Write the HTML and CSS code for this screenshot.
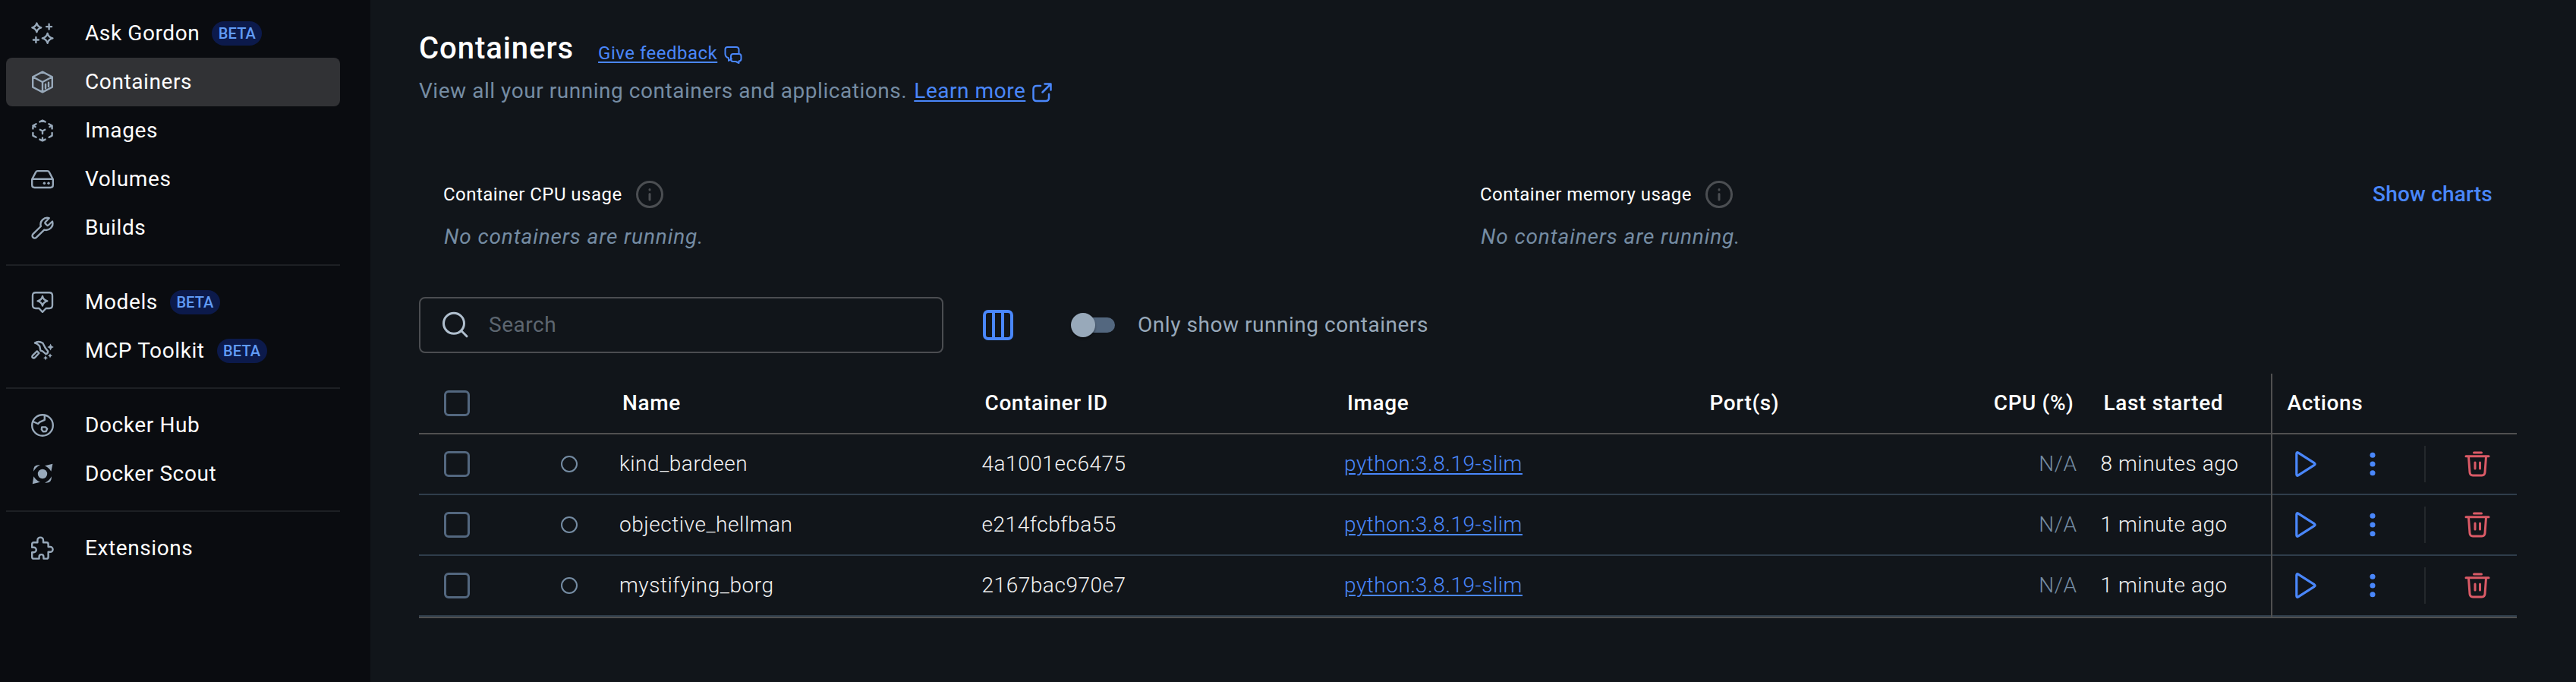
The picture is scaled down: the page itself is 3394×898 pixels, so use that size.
FILE: index.html
```html
<!DOCTYPE html>
<html lang="en">
<head>
<meta charset="utf-8">
<title>Containers</title>
<link rel="stylesheet" href="styles.css">
</head>
<body>
<div class="app">
  <nav class="sidebar">
    <a class="item">
      <svg class="icon" viewBox="0 0 32 32"><path d="M8.4 2.6Q9.4 7 14.2 8.4Q9.4 9.8 8.4 14.2Q7.2 9.8 2.4 8.4Q7.2 7 8.4 2.6ZM22.6 16Q23.8 21 29.4 22.4Q23.8 23.8 22.6 28.8Q21.3 23.8 15.8 22.4Q21.3 21 22.6 16ZM24.6 3.6v7M21.1 7.1h7M7.4 21v7M3.9 24.5h7"/></svg>
      <span>Ask Gordon</span><b class="badge">BETA</b>
    </a>
    <a class="item active">
      <svg class="icon" viewBox="0 0 32 32"><path d="M16 2.6 28.8 9.3V22.7L16 29.4 3.2 22.7V9.3ZM3.2 9.3 16 16 28.8 9.3M16 16V29M20 19v5.2M24 16.8v5.2"/></svg>
      <span>Containers</span>
    </a>
    <a class="item">
      <svg class="icon" viewBox="0 0 32 32"><path d="M12.4 4.4 16 2.6 19.6 4.4M24.4 7.2 28.6 9.5V13.4M28.6 9.5 25.4 11M28.6 19V22.6L24.6 24.7M19.6 27.6 16 29.4 12.4 27.6M16 29V25.4M7.6 24.7 3.4 22.6V19M3.4 13.4V9.5L7.6 7.2M3.4 9.5 6.6 11M12.8 14.8 16 16.5 19.2 14.8M16 16.5V20"/></svg>
      <span>Images</span>
    </a>
    <a class="item">
      <svg class="icon" viewBox="0 0 32 32"><path d="M2.2 16 7.2 6.6Q7.9 5.1 9.6 5.1H22.4Q24.1 5.1 24.8 6.6L29.8 16V23.6Q29.8 27 26.4 27H5.6Q2.2 27 2.2 23.6ZM2.6 15.8H29.4"/><g class="solid"><circle cx="18.4" cy="21.2" r="1.7"/><circle cx="24" cy="21.2" r="1.7"/></g></svg>
      <span>Volumes</span>
    </a>
    <a class="item">
      <svg class="icon" viewBox="0 0 32 32"><path d="M19.7 8.5a1.3 1.3 0 0 0 0 1.8l2.2 2.2a1.3 1.3 0 0 0 1.8 0L29 7.5A8.8 8.8 0 0 1 18.3 18.6L7.9 28.6a2.9 2.9 0 0 1-4.4-4.4L13.8 14A8.8 8.8 0 0 1 24.7 3.2Z"/></svg>
      <span>Builds</span>
    </a>
    <hr class="rule">
    <a class="item">
      <svg class="icon" viewBox="0 0 32 32"><path d="M7 3.2H25Q29 3.2 29 7.2V20Q29 24 25 24H20.6L16 28.8 11.4 24H7Q3 24 3 20V7.2Q3 3.2 7 3.2ZM16 8Q17 13 22.4 14.3Q17 15.6 16 20.6Q15 15.6 9.6 14.3Q15 13 16 8Z"/></svg>
      <span>Models</span><b class="badge">BETA</b>
    </a>
    <a class="item">
      <svg class="icon" viewBox="0 0 32 32"><path d="M6 5.600Q10.600 2.400 16.400 5.800L18.600 10 20 12.600 23.200 16.400Q23.400 19.400 20.400 20.200L16 16.400 13.400 15.600 12.200 9.800Q9.600 6.200 6 5.600ZM8.800 16.400 11.400 19 6.400 24.400Q4.400 26.400 3 25T3.400 21.600Z"/><g class="solid"><path d="M26.600 6.600 28 9.600 30.800 11 28 12.400 26.600 15.400 25.200 12.400 22.400 11 25.200 9.600ZM26 19.200 27 21.300 29 22.300 27 23.300 26 25.400 25 23.300 23 22.300 25 21.300ZM20 22 21 24.200 23 25.200 21 26.200 20 28.400 19 26.200 17 25.200 19 24.200Z"/></g></svg>
      <span>MCP Toolkit</span><b class="badge">BETA</b>
    </a>
    <hr class="rule">
    <a class="item">
      <svg class="icon" viewBox="0 0 32 32"><circle cx="16" cy="16" r="13.8"/><path d="M3.4 11 10 14 12.6 11.6 18.8 8.8V3M15.2 18.4 20 18.4 22.2 20.6 20.6 24 16.8 24.2 14.8 21.6Z"/></svg>
      <span>Docker Hub</span>
    </a>
    <a class="item">
      <svg class="icon" viewBox="0 0 32 32"><g class="solid"><circle cx="16" cy="16" r="6.2"/><path d="M29.400 2.800 27.400 12.800Q24.800 7.800 19 5.200ZM2.800 29.200 4.400 19.200Q7.200 24.200 13 26.800ZM4.200 12.800Q3.200 3.600 12.800 4.400Q6.800 7.200 4.200 12.800ZM27.800 19.200Q28.600 28.400 19.200 27.600Q25.200 24.800 27.800 19.200Z"/></g></svg>
      <span>Docker Scout</span>
    </a>
    <hr class="rule">
    <a class="item">
      <svg class="icon" viewBox="0 0 32 32"><path d="M9.4 8.2V5.4a3.7 3.7 0 0 1 7.6 0V8.2H21.4Q23.6 8.2 23.6 10.4V14H26.2a3.4 3.4 0 0 1 0 6.8H23.6V27.4Q23.6 29.6 21.4 29.6H17.4V27a2.9 2.9 0 0 0-5.8 0V29.6H4.4Q2.2 29.6 2.2 27.4V21.2H4.6a3.2 3.2 0 0 0 0-6.4H2.2V10.4Q2.2 8.2 4.4 8.2Z"/></svg>
      <span>Extensions</span>
    </a>
  </nav>

  <main class="main">
    <header class="heading">
      <h1>Containers</h1>
      <a class="feedback"><u>Give feedback</u><svg viewBox="0 0 24 24"><path d="M4.5 2H16Q19.5 2 19.5 5.500V11M10 17.500 6 20V16.500Q1.500 15 1.500 11V5Q1.500 2 4.500 2M12 11H19.500Q22.500 11 22.500 14V17.500Q22.500 20.500 19.500 20.500V23L15.500 21H12Q9 21 9 18V14Q9 11 12 11Z"/></svg></a>
    </header>
    <p class="intro"><span>View all your running containers and applications.</span> <a class="learn"><u>Learn more</u><svg viewBox="0 0 26 26"><path d="M11 4H6Q1.500 4 1.500 8.500V20Q1.500 24 6 24H17.500Q22 24 22 20V15M16.500 1.500H24.500V9.500M24 2 13.500 12.500"/></svg></a></p>

    <section class="usage">
      <div class="metric">
        <div class="metric-title"><span>Container CPU usage</span><svg class="info" viewBox="0 0 36 36"><circle cx="18" cy="18" r="16.500"/><path d="M18 17.500v7.500M18 11.500v.5"/></svg></div>
        <em>No containers are running.</em>
      </div>
      <div class="metric">
        <div class="metric-title"><span>Container memory usage</span><svg class="info" viewBox="0 0 36 36"><circle cx="18" cy="18" r="16.500"/><path d="M18 17.500v7.500M18 11.500v.5"/></svg></div>
        <em>No containers are running.</em>
      </div>
      <a class="show">Show charts</a>
    </section>

    <section class="toolbar">
      <div class="search"><svg viewBox="0 0 36 36"><circle cx="16" cy="15.800" r="13.500"/><path d="M25.500 25.300 33 32.800"/></svg><span>Search</span></div>
      <svg class="columns" viewBox="0 0 40 40"><rect x="2" y="2" width="36" height="36" rx="5"/><path d="M14 2V38M26 2V38"/></svg>
      <div class="switch"><i class="track"></i><i class="thumb"></i></div>
      <span class="switch-label">Only show running containers</span>
    </section>

    <section class="table">
      <div class="row head">
        <div class="check"><i></i></div><div></div><div>Name</div><div>Container ID</div><div>Image</div><div>Port(s)</div><div class="cpu">CPU (%)</div><div class="started">Last started</div><div class="last">Actions</div>
      </div>
      <div class="row">
        <div class="check"><i></i></div><div class="status"><i></i></div><div>kind_bardeen</div><div>4a1001ec6475</div><div><u>python:3.8.19-slim</u></div><div></div><div class="cpu">N/A</div><div class="started">8 minutes ago</div>
        <div class="actions"><svg class="play" viewBox="0 0 28 34"><path d="M1.800 3.400V30.600Q1.800 33.200 4 31.900L25.200 18.300Q27 17 25.200 15.700L4 2.100Q1.800 .8 1.800 3.400Z"/></svg><svg class="dots" viewBox="0 0 8 32"><circle cx="4" cy="4.300" r="3.500"/><circle cx="4" cy="16" r="3.500"/><circle cx="4" cy="27.700" r="3.500"/></svg><i class="sep"></i><svg class="trash" viewBox="0 0 34 34"><path d="M12.500 2H22.500M2 6.800H32M5.500 7.500 7 28Q7.300 32 11 32H23Q26.700 32 27 28L28.500 7.500M14 15V23M20.500 15V23"/></svg></div>
      </div>
      <div class="row">
        <div class="check"><i></i></div><div class="status"><i></i></div><div>objective_hellman</div><div>e214fcbfba55</div><div><u>python:3.8.19-slim</u></div><div></div><div class="cpu">N/A</div><div class="started">1 minute ago</div>
        <div class="actions"><svg class="play" viewBox="0 0 28 34"><path d="M1.800 3.400V30.600Q1.800 33.200 4 31.900L25.200 18.300Q27 17 25.200 15.700L4 2.100Q1.800 .8 1.800 3.400Z"/></svg><svg class="dots" viewBox="0 0 8 32"><circle cx="4" cy="4.300" r="3.500"/><circle cx="4" cy="16" r="3.500"/><circle cx="4" cy="27.700" r="3.500"/></svg><i class="sep"></i><svg class="trash" viewBox="0 0 34 34"><path d="M12.500 2H22.500M2 6.800H32M5.500 7.500 7 28Q7.300 32 11 32H23Q26.700 32 27 28L28.500 7.500M14 15V23M20.500 15V23"/></svg></div>
      </div>
      <div class="row">
        <div class="check"><i></i></div><div class="status"><i></i></div><div>mystifying_borg</div><div>2167bac970e7</div><div><u>python:3.8.19-slim</u></div><div></div><div class="cpu">N/A</div><div class="started">1 minute ago</div>
        <div class="actions"><svg class="play" viewBox="0 0 28 34"><path d="M1.800 3.400V30.600Q1.800 33.200 4 31.900L25.200 18.300Q27 17 25.200 15.700L4 2.100Q1.800 .8 1.800 3.400Z"/></svg><svg class="dots" viewBox="0 0 8 32"><circle cx="4" cy="4.300" r="3.500"/><circle cx="4" cy="16" r="3.500"/><circle cx="4" cy="27.700" r="3.500"/></svg><i class="sep"></i><svg class="trash" viewBox="0 0 34 34"><path d="M12.500 2H22.500M2 6.800H32M5.500 7.500 7 28Q7.300 32 11 32H23Q26.700 32 27 28L28.500 7.500M14 15V23M20.500 15V23"/></svg></div>
      </div>
    </section>
  </main>
</div>
</body>
</html>
```
FILE: styles.css
```css
* { box-sizing: border-box; }
body { margin: 0; background: #11151a; color: #fff; font: 400 28px/40px Roboto, sans-serif; letter-spacing: .54px; }
svg { display: block; flex: none; fill: none; stroke: currentColor; stroke-linecap: round; stroke-linejoin: round; }
u { text-decoration-thickness: 2px; text-underline-offset: 3px; }
.app { display: flex; height: 898px; }

.sidebar { width: 488px; flex: none; padding: 12px 40px 0 8px; background: #0a0c10; }
.item { display: flex; align-items: center; height: 64px; padding-left: 32px; border-radius: 8px; letter-spacing: .6px; }
.item.active { background: #313235; }
.icon { width: 32px; height: 32px; margin-right: 40px; color: #98a9ba; stroke-width: 2.4; }
.solid { fill: currentColor; stroke: none; }
.badge { width: 66px; height: 32px; margin-left: 16px; border-radius: 16px; background: #0c1a4b; color: #619cf7; font-size: 20px; line-height: 32px; font-weight: 500; letter-spacing: .1px; text-align: center; }
.rule { height: 2px; margin: 16px 0; border: 0; background: #1d2024; }

.main { flex: 1; min-width: 0; padding: 40px 78px 0 64px; }
.heading { display: flex; align-items: flex-start; height: 60px; }
h1 { margin: 0; font-size: 40px; line-height: 48px; font-weight: 500; letter-spacing: .95px; }
.feedback { display: flex; margin: 10px 0 0 32px; color: #4a87fb; font-size: 24px; line-height: 40px; letter-spacing: .5px; }
.feedback svg { width: 24px; height: 24px; margin: 10px 0 0 9px; stroke-width: 2; }
.intro { display: flex; gap: 9px; margin: 0; height: 40px; color: #758ca3; }
.learn { display: flex; color: #4a87fb; }
.learn svg { width: 26px; height: 26px; margin: 9px 0 0 9px; stroke-width: 2.5; }

.usage { display: grid; grid-template-columns: 1366px 1fr auto; height: 196px; margin-top: 95px; padding: 0 32px; }
.metric-title { display: flex; align-items: center; gap: 18px; height: 42px; font-size: 24px; letter-spacing: .48px; }
.info { width: 36px; height: 36px; color: #4b4e52; stroke-width: 3; }
.metric em { display: block; margin-top: 15px; padding-left: 1px; color: #758ca3; letter-spacing: .88px; }
.show { margin-top: 1px; color: #4a87fb; font-weight: 500; letter-spacing: .2px; white-space: nowrap; }

.toolbar { display: flex; align-items: center; height: 74px; margin-top: -40px; }
.search { display: flex; align-items: center; gap: 26px; width: 691px; height: 74px; padding-left: 28px; border: 2px solid #4b4d51; border-radius: 8px; color: #5d6670; }
.search svg { width: 36px; height: 36px; color: #b0bfce; stroke-width: 3; }
.columns { width: 40px; height: 40px; margin-left: 52px; color: #4a87fb; stroke-width: 4; }
.switch { display: grid; align-items: center; width: 58px; height: 32px; margin-left: 76px; }
.track, .thumb { grid-area: 1 / 1; }
.track { height: 20px; margin-left: 6px; border-radius: 10px; background: #53677f; }
.thumb { width: 32px; height: 32px; border-radius: 50%; background: #98a9ba; box-shadow: 0 2px 3px rgba(0,0,0,.4); }
.switch-label { margin-left: 30px; color: #98a9ba; }

.table { margin-top: 27px; border-bottom: 2px solid #505050; }
.row { display: grid; grid-template-columns: 100px 152px 477.5px 477.5px 477.5px 364px 153px 240px 1fr; height: 80px; border-bottom: 2px solid #2f3d4b; color: #f1f2f3; font-weight: 300; }
.row > div { display: flex; align-items: center; padding: 0 12px; }
.row.head { border-color: #505050; color: #fff; font-weight: 500; letter-spacing: .6px; }
.row.head > div { padding: 0 16px; }
.row.head > .cpu { padding-right: 21px; }
.row > .cpu { justify-content: flex-end; padding-right: 17px; color: #758ca3; }
.row.head > .cpu { color: #fff; }
.row > .started { border-right: 2px solid #505050; margin-bottom: -2px; padding: 0 0 2px 14px; white-space: nowrap; }
.row.head > .started { padding: 0 0 2px 18px; }
.row.head > .last { padding-left: 20px; }
.row > .check, .row.head > .check { padding: 0 0 0 33px; }
.check i { width: 34px; height: 34px; border: 3.500px solid #53677f; border-radius: 6px; }
.row > .status { padding-left: 87px; }
.status i { width: 22px; height: 22px; border: 2px solid #758ca3; border-radius: 50%; }
.row u { color: #4a87fb; }
.row > .actions { padding: 0 0 0 30px; }
.play { width: 28px; height: 34px; color: #4a87fb; stroke-width: 3.200; }
.dots { width: 8px; height: 32px; margin-left: 70px; color: #4a87fb; fill: currentColor; stroke: none; }
.sep { width: 2px; height: 48px; margin-left: 64px; background: #24282c; }
.trash { width: 34px; height: 34px; margin-left: 51px; color: #da5a66; stroke-width: 3; }
```
